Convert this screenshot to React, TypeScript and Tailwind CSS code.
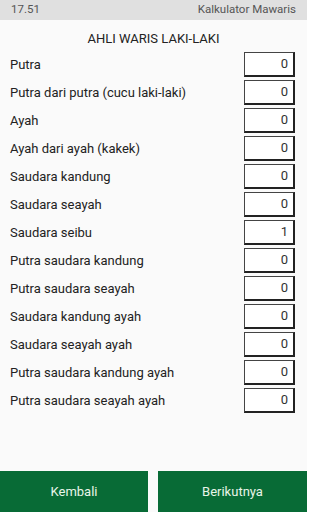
import React from "react";

const rows: [string, string][] = [
  ["Putra", "0"],
  ["Putra dari putra (cucu laki-laki)", "0"],
  ["Ayah", "0"],
  ["Ayah dari ayah (kakek)", "0"],
  ["Saudara kandung", "0"],
  ["Saudara seayah", "0"],
  ["Saudara seibu", "1"],
  ["Putra saudara kandung", "0"],
  ["Putra saudara seayah", "0"],
  ["Saudara kandung ayah", "0"],
  ["Saudara seayah ayah", "0"],
  ["Putra saudara kandung ayah", "0"],
  ["Putra saudara seayah ayah", "0"],
];

export default function App() {
  return (
    <div
      className="w-[307px] h-[512px] flex flex-col bg-[#fafafa] overflow-hidden"
      style={{ fontFamily: "Roboto, 'Liberation Sans', sans-serif" }}
    >
      <div className="h-[20px] bg-[#e0e0e0] flex items-center justify-between pl-[11px] pr-[11px] text-[11.5px] text-[#555]">
        <span>17.51</span>
        <span>Kalkulator Mawaris</span>
      </div>
      <div className="h-[31px] flex items-center justify-center text-[13px] text-[#222] pt-[7px]">
        AHLI WARIS LAKI-LAKI
      </div>
      <div className="flex flex-col gap-[3px] pl-[10px] pr-[12px] pt-[1px]">
        {rows.map(([label, val], i) => (
          <div key={i} className="flex items-center justify-between h-[25px]">
            <span className="text-[13px] text-[#222]">{label}</span>
            <div className="w-[51px] h-[25px] border border-[#444] border-b-[#222] border-r-[#222] border-b-2 border-r-2 bg-white flex items-center justify-end pr-[5px] text-[13px] text-[#333]">
              {val}
            </div>
          </div>
        ))}
      </div>
      <div className="flex-1" />
      <div className="h-[41px] flex justify-between">
        <div className="w-[148px] bg-[#086b36] flex items-center justify-center text-[13px] text-[#e8f5e9]">
          Kembali
        </div>
        <div className="w-[149px] bg-[#086b36] flex items-center justify-center text-[13px] text-[#e8f5e9]">
          Berikutnya
        </div>
      </div>
    </div>
  );
}
